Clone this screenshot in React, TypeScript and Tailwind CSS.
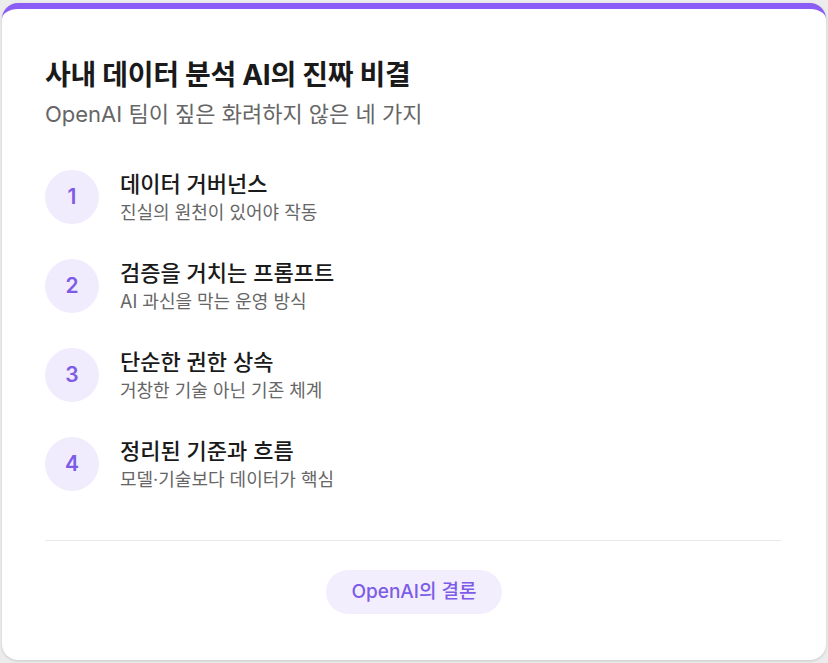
export default function App() {
  const items = [
    ["데이터 거버넌스", "진실의 원천이 있어야 작동"],
    ["검증을 거치는 프롬프트", "AI 과신을 막는 운영 방식"],
    ["단순한 권한 상속", "거창한 기술 아닌 기존 체계"],
    ["정리된 기준과 흐름", "모델·기술보다 데이터가 핵심"],
  ];
  return (
    <div className="w-[828px] h-[663px] bg-[#ececec] pt-[3px] px-[2px] pb-[3px]" style={{ fontFamily: "Inter, 'Noto Sans CJK KR', sans-serif" }}>
      <div className="h-full bg-white rounded-[16px] border-t-[6px] border-[#8b5cf6] shadow-[0_1px_3px_rgba(0,0,0,0.15)] px-[43px] pt-[48px] flex flex-col">
        <h1 className="text-[28px] font-bold text-[#1a1a1a] leading-[36px] tracking-[-0.3px]">사내 데이터 분석 AI의 진짜 비결</h1>
        <p className="text-[22px] text-[#666] leading-[30px] mt-[6px]">OpenAI 팀이 짚은 화려하지 않은 네 가지</p>
        <div className="mt-[40px] flex flex-col gap-[33px]">
          {items.map(([t, s], i) => (
            <div key={i} className="flex items-center gap-[21px]">
              <div className="w-[54px] h-[54px] rounded-full bg-[#f1ebfe] text-[#7c5ce6] text-[21px] font-semibold flex items-center justify-center">{i + 1}</div>
              <div className="flex flex-col">
                <div className="text-[22px] font-medium text-[#1a1a1a] leading-[30px]">{t}</div>
                <div className="text-[18px] text-[#666] leading-[24px] mt-[2px]">{s}</div>
              </div>
            </div>
          ))}
        </div>
        <div className="mt-[48px] h-px bg-[#e8e8e8] mr-[2px]" />
        <div className="flex justify-center mt-[29px]">
          <div className="h-[44px] px-[25px] rounded-full bg-[#f3eefe] text-[#7c5ce6] text-[19px] font-medium flex items-center">OpenAI의 결론</div>
        </div>
      </div>
    </div>
  );
}
